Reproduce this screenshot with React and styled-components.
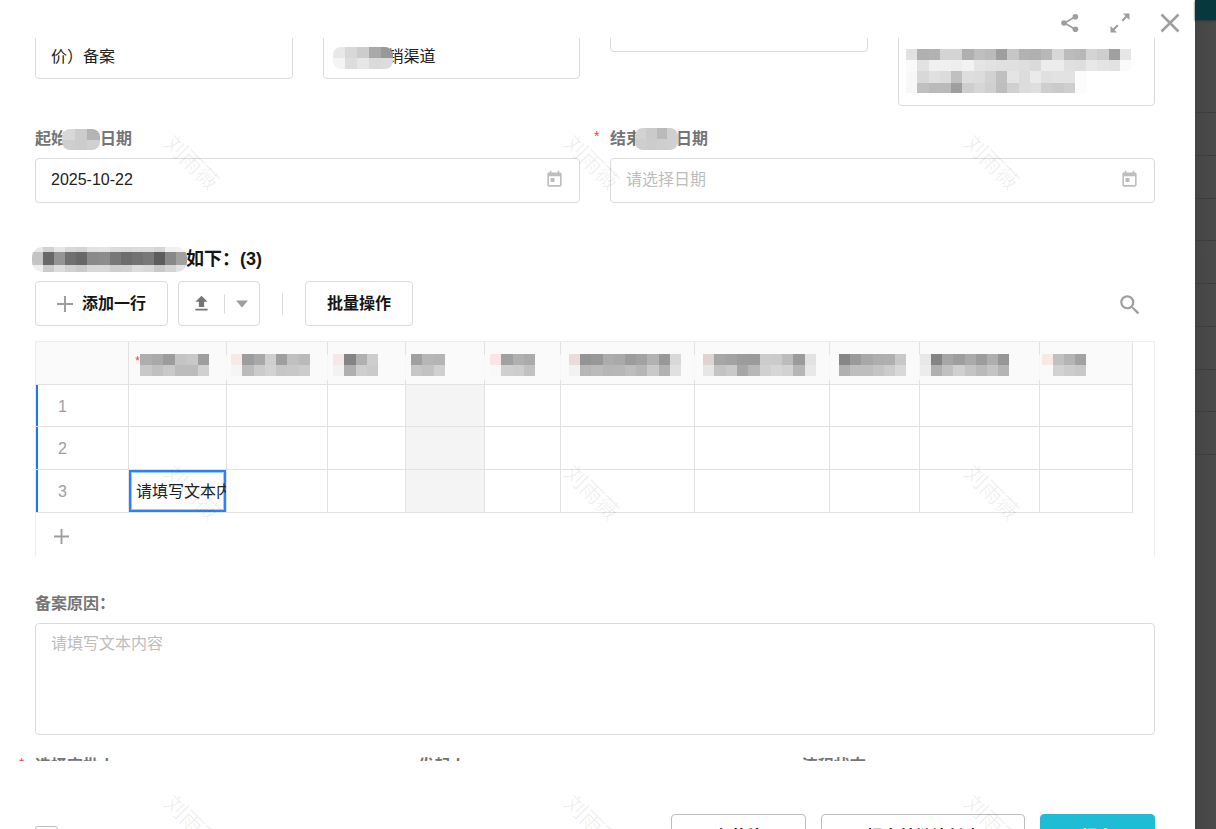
import React from "react";
import styled, { createGlobalStyle, css } from "styled-components";
import { MdToday, MdSearch, MdUpload } from "react-icons/md";

const GlobalStyle = createGlobalStyle`
  *, *::before, *::after { box-sizing: border-box; }
  body { margin: 0; overflow: hidden; }
  body, button, input, textarea {
    font-family: "Liberation Sans", "Noto Sans CJK SC", sans-serif;
    font-size: 16px;
    line-height: 24px;
    color: #212121;
  }
`;

const Page = styled.div`
  position: relative;
  display: flex;
  height: 100vh;
  overflow: hidden;
  background: #4a4a4a;
`;

const Dialog = styled.main`
  flex: 1;
  min-width: 0;
  display: flex;
  flex-direction: column;
  background: #fff;
`;

const DialogHeader = styled.header`
  flex: none;
  height: 38px;
  padding: 8px 10px 0 0;
  display: flex;
  justify-content: flex-end;
  gap: 20px;
`;

const IconButton = styled.button`
  flex: none;
  border: 0;
  padding: 0;
  background: none;
  width: ${(p) => p.$size || 30}px;
  height: 30px;
  display: flex;
  align-items: center;
  justify-content: center;
  color: ${(p) => p.$color || "#9e9e9e"};
`;

const ScrollArea = styled.div`
  flex: 1;
  min-height: 0;
  overflow: hidden;
`;

const Form = styled.form`
  margin-top: -12px;
  padding: 0 40px 0 35px;
`;

const Columns = styled.div`
  display: grid;
  grid-template-columns: repeat(${(p) => p.$count}, minmax(0, 1fr));
  align-items: start;
  column-gap: 30px;
  margin-top: ${(p) => p.$top || 0}px;
`;

const fieldFrame = css`
  border: 1px solid #dcdcdc;
  border-radius: 4px;
  background: #fff;
`;

const TextBox = styled.div`
  ${fieldFrame}
  height: ${(p) => p.$height}px;
  padding: ${(p) => p.$pad || "0 15px 9px"};
  display: flex;
  align-items: flex-end;
`;

const BareInput = styled.input`
  flex: 1;
  min-width: 0;
  height: 24px;
  border: 0;
  outline: 0;
  padding: 0;
  background: transparent;
  &::placeholder { color: #bdbdbd; opacity: 1; }
`;

const DateBox = styled.div`
  ${fieldFrame}
  height: 45px;
  padding: 0 15px 2px;
  display: flex;
  align-items: center;
  color: #bdbdbd;
`;

const Label = styled.label`
  position: relative;
  display: flex;
  align-items: center;
  height: 24px;
  padding-top: 2px;
  margin-bottom: 8px;
  font-weight: 700;
  color: #757575;
  white-space: nowrap;
`;

const Required = styled.span`
  position: absolute;
  left: -16px;
  top: 0;
  font-size: 14px;
  line-height: 20px;
  font-weight: 400;
  color: #f44336;
`;

const MosaicSvg = styled.svg`
  flex: none;
  display: block;
  position: relative;
  margin-left: ${(p) => p.$overlap || 0}px;
  margin-right: ${(p) => p.$tuck || 0}px;
  border-radius: ${(p) => p.$radius || 0}px;
`;

const SectionTitle = styled.h2`
  margin: 42px 0 8px;
  height: 28px;
  display: flex;
  align-items: center;
  font-size: 18px;
  line-height: 28px;
  color: #151515;
`;

const Toolbar = styled.div`
  display: flex;
  align-items: center;
  height: 45px;
  margin-bottom: 15px;
`;

const ToolButton = styled.button`
  ${fieldFrame}
  height: 45px;
  padding: 0 21px;
  display: flex;
  align-items: center;
  gap: 9px;
  font-weight: 700;
  white-space: nowrap;
  color: #151515;
`;

const SplitGroup = styled.div`
  ${fieldFrame}
  height: 45px;
  width: 82px;
  margin-left: 10px;
  display: flex;
  align-items: center;
`;

const Divider = styled.span`
  width: 1px;
  height: ${(p) => p.$height}px;
  margin: 0 ${(p) => p.$gap || 0}px;
  background: #dcdcdc;
`;

const SearchSlot = styled.div`
  margin-left: auto;
  padding: 2px 10px 0 0;
`;

const Sheet = styled.div`
  height: 215px;
  border: 1px solid #eee;
  border-bottom: 0;
`;

const Grid = styled.table`
  width: 1097px;
  height: 171px;
  table-layout: fixed;
  border-collapse: separate;
  border-spacing: 0;
`;

const HeadCell = styled.th`
  height: 43px;
  padding: 4px 0 0 ${(p) => p.$inset || 0}px;
  border-bottom: 1px solid #e2e2e2;
  background-color: #fafafa;
  background-image: ${(p) =>
    p.$solid
      ? "linear-gradient(#e2e2e2, #e2e2e2)"
      : "linear-gradient(#e2e2e2 13px, #f7f7f7 13px, #f7f7f7 38px, #e2e2e2 38px)"};
  background-size: 1px 100%;
  background-position: right top;
  background-repeat: no-repeat;
`;

const HeadContent = styled.div`
  display: flex;
  align-items: center;
  span {
    align-self: flex-start;
    font-size: 12px;
    font-weight: 400;
    line-height: 14px;
    width: 5px;
    color: #f44336;
  }
`;

const Cell = styled.td`
  height: 42px;
  padding: 0;
  border-right: 1px solid #e2e2e2;
  border-bottom: 1px solid #e2e2e2;
  background: ${(p) => (p.$locked ? "#f4f4f4" : "#fff")};
`;

const RowNumber = styled.th`
  height: 42px;
  padding: 2px 0 0 22px;
  border-right: 1px solid #e2e2e2;
  border-bottom: 1px solid #e2e2e2;
  background: linear-gradient(#1677ff, #1677ff) left top / 2px 100% no-repeat;
  background-clip: padding-box;
  text-align: left;
  font-weight: 400;
  color: #9e9e9e;
`;

const CellInput = styled.input`
  display: block;
  width: 100%;
  height: 42px;
  border: 0;
  outline: 0;
  border-radius: 0;
  padding: 0 0 2px 7px;
  background: transparent;
  box-shadow: inset 0 0 0 2px #2680ff, inset 0 0 0 3px #a4c8fc;
`;

const AddRow = styled.div`
  padding: 8px 0 0 10px;
`;

const Block = styled.div`
  margin-top: 35px;
`;

const Reason = styled.textarea`
  ${fieldFrame}
  display: block;
  width: 100%;
  height: 112px;
  padding: 8px 15px;
  resize: none;
  outline: 0;
  &::placeholder { color: #bdbdbd; opacity: 1; }
`;

const Footer = styled.footer`
  flex: none;
  height: 68px;
  overflow: hidden;
  padding: 53px 40px 0 35px;
  display: flex;
  align-items: flex-start;
  gap: 15px;
`;

const Check = styled.input`
  appearance: none;
  flex: none;
  width: 23px;
  height: 23px;
  margin: 12px auto 0 0;
  border: 1px solid #bdbdbd;
  border-radius: 3px;
  background: #fff;
`;

const FooterButton = styled.button`
  flex: none;
  width: ${(p) => p.$width}px;
  height: 45px;
  padding: 0;
  border: 1px solid ${(p) => (p.$primary ? "#1fbcd6" : "#bdbdbd")};
  border-radius: 4px;
  background: ${(p) => (p.$primary ? "#1fbcd6" : "#fff")};
  color: ${(p) => (p.$primary ? "#fff" : "#151515")};
  font-weight: 700;
`;

const Backdrop = styled.aside`
  flex: none;
  width: 21px;
  background: linear-gradient(to right, #454545, #4b4b4b);
`;

const BackdropBar = styled.div`
  height: 20px;
  background: #07383e;
  box-shadow: 0 1px 2px #333;
`;

const BackdropRows = styled.div`
  height: 343px;
  margin-top: 92px;
  display: grid;
  grid-template-rows: repeat(8, 1fr);
  border-bottom: 1px solid #3d3d3d;
  div { border-top: 1px solid #3d3d3d; }
`;

const WatermarkLayer = styled.div`
  position: absolute;
  top: -2px;
  left: -9px;
  display: grid;
  grid-template-columns: repeat(3, 400px);
  grid-auto-rows: 330px;
  pointer-events: none;
  span {
    display: flex;
    align-items: center;
    justify-content: center;
    font-size: 22px;
    color: rgba(0, 0, 0, 0.065);
    transform: rotate(45deg);
  }
`;

/* Pixelated cover over a private piece of text; each cell is a grey level or a full hex colour. */
function Mosaic({ rows, width, heights, overlap, tuck, radius }) {
  const hs = heights || rows.map(() => 11);
  const total = hs.reduce((a, b) => a + b, 0);
  let y = 0;
  return (
    <MosaicSvg
      width={width}
      height={total}
      $overlap={overlap}
      $tuck={tuck}
      $radius={radius}
      shapeRendering="crispEdges"
      aria-hidden="true"
    >
      {rows.map((row, r) => {
        const cells = row.split(" ");
        const w = width / cells.length;
        const top = y;
        y += hs[r];
        return cells.map((c, i) =>
          c === "--" ? null : (
            <rect
              key={r + "-" + i}
              x={i * w}
              y={top}
              width={w + 0.5}
              height={hs[r]}
              fill={c.length === 2 ? "#" + c + c + c : "#" + c}
            />
          )
        );
      })}
    </MosaicSvg>
  );
}

const Plus = ({ size }) => (
  <svg width={size} height={size} viewBox="0 0 16 16" stroke="#9e9e9e" strokeWidth="2" aria-hidden="true">
    <path d="M8 0v16M0 8h16" />
  </svg>
);

const ShareIcon = () => (
  <svg width="18" height="20" viewBox="0 0 18 20" fill="#9e9e9e" aria-hidden="true">
    <path d="M14.5 3.5 3.5 10l11 6.5" fill="none" stroke="#9e9e9e" strokeWidth="1.6" />
    <circle cx="14.4" cy="3.7" r="2.8" />
    <circle cx="3" cy="10" r="2.8" />
    <circle cx="14.4" cy="16.3" r="2.8" />
  </svg>
);

const ExpandIcon = () => (
  <svg width="20" height="20" viewBox="0 0 20 20" fill="#9e9e9e" aria-hidden="true">
    <path d="M13 0.5h6.5V7zM0.5 13v6.5H7z" />
    <path d="m12.2 7.8 4.5-4.5M7.8 12.2l-4.5 4.5" stroke="#9e9e9e" strokeWidth="2" />
  </svg>
);

const CloseIcon = () => (
  <svg width="20" height="20" viewBox="0 0 20 20" stroke="#9e9e9e" strokeWidth="2.5" aria-hidden="true">
    <path d="m1.5 1.5 17 17M18.5 1.5l-17 17" />
  </svg>
);

const CaretIcon = () => (
  <svg width="12" height="8" viewBox="0 0 12 8" fill="#9e9e9e" aria-hidden="true">
    <path d="M0 0.5h12L6 7.5z" />
  </svg>
);

const columns = [
  { w: 98, inset: 6, star: true, mw: 69, rows: ["ae aa 9c c4 c8 9e", "c8 c0 c8 bc bc d0"] },
  { w: 101, inset: 4, mw: 79, rows: ["f7e9e6 9d a9 cf 9f c0 ba", "f5 bb cb d2 c6 c8 cc"] },
  { w: 78, inset: 5, mw: 45, rows: ["f6e8e8 84 b0 cd", "f2 af ce ca"] },
  { w: 79, inset: 5, mw: 34, rows: ["a0 b6 b4", "c6 c2 cf"] },
  { w: 76, inset: 5, mw: 45, rows: ["f7e7e4 a0 b0 ab", "f8 cf cd c2"] },
  { w: 134, inset: 8, mw: 112, rows: ["e9dcd9 94 98 ac a9 9c a2 b2 98 d8", "f2 b6 bb b6 b7 bd b6 c9 b2 e0"] },
  { w: 135, inset: 8, mw: 113, rows: ["ddd3d1 a6 a2 9c 9b cc cb bc 9b e2", "e6 c3 c9 a7 b8 d0 d6 d2 b6 e8"] },
  { w: 90, inset: 9, mw: 67, rows: ["86 9a a8 ae af c8", "b0 be be c4 cc d8"] },
  { w: 120, inset: 0, mw: 89, rows: ["e8 84 a6 9e aa 9c ae 96", "ec b0 c0 d0 c4 ba c4 b4"] },
  { w: 93, inset: 2, mw: 44, last: true, rows: ["f9e9e6 c0 b4 a2", "fa d2 cc c8"] },
];

export default function App() {
  return (
    <Page>
      <GlobalStyle />
      <Dialog>
        <DialogHeader>
          <IconButton aria-label="分享"><ShareIcon /></IconButton>
          <IconButton aria-label="全屏"><ExpandIcon /></IconButton>
          <IconButton aria-label="关闭"><CloseIcon /></IconButton>
        </DialogHeader>

        <ScrollArea>
          <Form onSubmit={(e) => e.preventDefault()}>
            <Columns $count={4}>
              <TextBox $height={53}>
                <BareInput aria-label="标题" defaultValue="价）备案" />
              </TextBox>
              <TextBox $height={53}>
                <Mosaic
                  width={60}
                  heights={[11, 11]}
                  overlap={-6}
                  tuck={-5}
                  radius={8}
                  rows={["e8 d8 cc a8 98", "f4 dd e6 da dc"]}
                />
                <BareInput aria-label="渠道" defaultValue="销渠道" />
              </TextBox>
              <TextBox $height={26}>
                <BareInput aria-label="备注" />
              </TextBox>
              <TextBox $height={80} $pad="0 7px 12px">
                <Mosaic
                  width={225}
                  heights={[11, 11, 12, 10]}
                  rows={[
                    "e2 b0 b2 d4 d4 b0 be ba 9e c6 b2 b0 b8 d8 bc b8 d4 ce a0 e6",
                    "fa e2 f0 f0 ee f2 e4 e2 e0 e0 de da ec ec e0 de e8 e4 e2 fa",
                    "f8 d8 e0 dc c0 de dc d2 c0 e4 dc ea e0 e2 e2 fc -- -- -- --",
                    "f8 c0 ba ba 9e ce d6 d0 be d0 dc de ce ca ce fc -- -- -- --",
                  ]}
                />
              </TextBox>
            </Columns>

            <Columns $count={2} $top={20}>
              <div>
                <Label htmlFor="start">
                  起始
                  <Mosaic width={38} heights={[11, 10]} overlap={-5} radius={8} rows={["d8 cc b4", "ce cc d0"]} />
                  日期
                </Label>
                <DateBox>
                  <BareInput id="start" defaultValue="2025-10-22" />
                  <MdToday size={19} />
                </DateBox>
              </div>
              <div>
                <Label htmlFor="end">
                  <Required>*</Required>
                  结束
                  <Mosaic
                    width={43}
                    heights={[11, 11]}
                    overlap={-7}
                    tuck={-2}
                    radius={8}
                    rows={["d2 ca ba d0", "ce cc ce d0"]}
                  />
                  日期
                </Label>
                <DateBox>
                  <BareInput id="end" placeholder="请选择日期" />
                  <MdToday size={19} />
                </DateBox>
              </div>
            </Columns>

            <SectionTitle>
              <Mosaic
                width={155}
                heights={[5, 13, 7]}
                overlap={-3}
                tuck={-1}
                radius={10}
                rows={[
                  "e8 d2 e6 d8 d4 e2 e4 dc da dc dc d6 f0 f2",
                  "c4 68 94 70 68 8a 8c 78 6c 72 78 5c 88 a0",
                  "ee ca dc d0 ca d8 d8 ce d0 dc d8 c8 d4 e2",
                ]}
              />
              如下：(3)
            </SectionTitle>

            <Toolbar>
              <ToolButton type="button">
                <Plus size={16} />
                添加一行
              </ToolButton>
              <SplitGroup>
                <IconButton type="button" $size={45} $color="#757575" aria-label="导入">
                  <MdUpload size={21} />
                </IconButton>
                <Divider $height={20} />
                <IconButton type="button" $size={34} aria-label="更多">
                  <CaretIcon />
                </IconButton>
              </SplitGroup>
              <Divider $height={22} $gap={22} />
              <ToolButton type="button">批量操作</ToolButton>
              <SearchSlot>
                <IconButton type="button" aria-label="搜索"><MdSearch size={26} /></IconButton>
              </SearchSlot>
            </Toolbar>

            <Sheet>
              <Grid>
                <colgroup>
                  <col style={{ width: 93 }} />
                  {columns.map((c, i) => (
                    <col key={i} style={{ width: c.w }} />
                  ))}
                </colgroup>
                <thead>
                  <tr>
                    <HeadCell $solid />
                    {columns.map((c, i) => (
                      <HeadCell key={i} $inset={c.inset} $solid={c.last}>
                        <HeadContent>
                          {c.star && <span>*</span>}
                          <Mosaic width={c.mw} rows={c.rows} />
                        </HeadContent>
                      </HeadCell>
                    ))}
                  </tr>
                </thead>
                <tbody>
                  {[1, 2, 3].map((n) => (
                    <tr key={n}>
                      <RowNumber scope="row">{n}</RowNumber>
                      {columns.map((c, i) => (
                        <Cell key={i} $locked={i === 3}>
                          {n === 3 && i === 0 && (
                            <CellInput aria-label="文本内容" defaultValue="请填写文本内容" />
                          )}
                        </Cell>
                      ))}
                    </tr>
                  ))}
                </tbody>
              </Grid>
              <AddRow>
                <IconButton type="button" aria-label="新增一行"><Plus size={15} /></IconButton>
              </AddRow>
            </Sheet>

            <Block>
              <Label htmlFor="reason">备案原因：</Label>
              <Reason id="reason" placeholder="请填写文本内容" />
            </Block>

            <Columns $count={3} $top={18}>
              <Label as="div"><Required>*</Required>选择审批人</Label>
              <Label as="div">发起人</Label>
              <Label as="div">流程状态</Label>
            </Columns>
          </Form>
        </ScrollArea>

        <Footer>
          <Check type="checkbox" aria-label="选择" />
          <FooterButton $width={135}>存草稿</FooterButton>
          <FooterButton $width={204}>提交并继续创建</FooterButton>
          <FooterButton $width={115} $primary>提交</FooterButton>
        </Footer>
      </Dialog>

      <Backdrop aria-hidden="true">
        <BackdropBar />
        <BackdropRows>
          {Array.from({ length: 8 }, (_, i) => <div key={i} />)}
        </BackdropRows>
      </Backdrop>

      <WatermarkLayer aria-hidden="true">
        {Array.from({ length: 9 }, (_, i) => <span key={i}>刘雨薇</span>)}
      </WatermarkLayer>
    </Page>
  );
}
